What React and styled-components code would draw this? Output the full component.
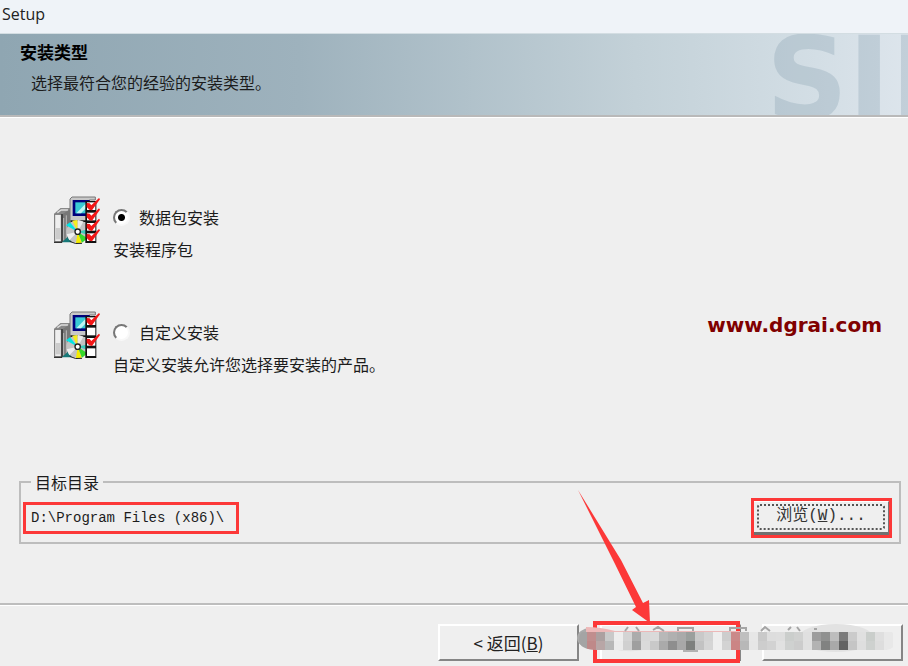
import { styled, createGlobalStyle } from "styled-components";

const songti = `"Liberation Mono", "Noto Sans CJK SC", monospace`;
const red = "#fc3838";

const GlobalStyle = createGlobalStyle`
  * {
    box-sizing: border-box;
  }

  body {
    margin: 0px;
    color: #1c1c1c;
    background-color: #efefef;
    font-size: 16px;
    font-family: "Noto Sans CJK SC", sans-serif;
  }
`;

const Window = styled.div`
  min-height: 100vh;
  display: flex;
  flex-direction: column;
  overflow: hidden;
`;

const TitleBar = styled.header`
  height: 33px;
  padding: 0px 2px;
  color: #222;
  line-height: 28px;
  font-family: "Open Sans", sans-serif;
  background-color: #eff3f8;
`;

const Banner = styled.div`
  position: relative;
  height: 84px;
  padding: 6px 20px;
  overflow: hidden;
  border-top: 1px solid #d3dde2;
  border-bottom: 2px solid #b9b9b9;
  box-shadow: 0px 1px 0px white;
  background: linear-gradient(
    to right,
    #8fa6b2 0%,
    #9eb2bd 33%,
    #c3d1d8 70%,
    #d3dee5 90%,
    #dde5ec 100%
  );
`;

const BannerTitle = styled.h1`
  margin: 0px;
  font-size: 17px;
  line-height: 24px;
  color: black;
`;

const BannerText = styled.p`
  margin: 0px;
  padding: 6px 11px;
  line-height: 24px;
`;

const BannerMark = styled.span`
  position: absolute;
  top: 2px;
  left: calc(100% - 142px);
  font-size: 114px;
  font-weight: bold;
  line-height: 86px;
  white-space: nowrap;
  color: rgba(138, 163, 178, 0.32);
  font-family: "DejaVu Sans", sans-serif;
`;

const Options = styled.div`
  display: flex;
  flex-direction: column;
  gap: 42px;
  padding: 75px 50px 40px;
`;

const Option = styled.div`
  display: flex;
  align-items: flex-start;
  gap: 9px;
`;

const OptionText = styled.div`
  padding-top: 9px;
  line-height: 32px;
`;

const RadioLabel = styled.label`
  display: flex;
  align-items: center;
  gap: 9px;
`;

const Radio = styled.input`
  appearance: none;
  width: 17px;
  height: 17px;
  margin: 0px;
  border: 2px solid;
  border-color: #777 #f8f8f8 #f8f8f8 #777;
  border-radius: 50%;
  background-color: white;

  &:checked {
    background-image: radial-gradient(circle, black 3px, transparent 4px);
  }
`;

const Description = styled.p`
  margin: 0px;
`;

const SiteName = styled.span`
  position: absolute;
  right: 26px;
  top: 310px;
  color: #800000;
  font-size: 20px;
  font-weight: bold;
  line-height: 30px;
  font-family: "DejaVu Sans", sans-serif;
`;

const Directory = styled.fieldset`
  margin: auto 7px 59px 19px;
  padding: 4px 7px 4px 2px;
  border: 2px solid #bdbdbd;
`;

const Legend = styled.legend`
  margin-left: 8px;
  padding: 0px 4px;
  line-height: 24px;
`;

const DirectoryRow = styled.div`
  display: flex;
  align-items: center;
  justify-content: space-between;
`;

const Path = styled.output`
  height: 32px;
  padding: 0px 12px 0px 5px;
  border: 3px solid ${red};
  font-size: 14px;
  line-height: 26px;
  font-family: ${songti};
`;

const BrowseFrame = styled.div`
  height: 40px;
  border: 3px solid ${red};
`;

const Browse = styled.button`
  width: 135px;
  height: 34px;
  padding: 2px 3px;
  border: none;
  border-top: 1px solid white;
  border-right: 1px solid #777;
  border-bottom: 3px solid #707070;
  color: #333;
  font-size: 16px;
  font-family: ${songti};
  background-color: #efefef;
`;

const FocusRing = styled.span`
  display: block;
  height: 26px;
  border: 2px dotted #555;
  border-radius: 3px;
  line-height: 20px;
`;

const Footer = styled.footer`
  position: relative;
  display: flex;
  justify-content: flex-end;
  gap: 21px;
  padding: 19px 5px 5px;
  border-top: 2px solid #bdbdbd;
  box-shadow: inset 0px 1px 0px white;
`;

const WizardButton = styled.button`
  width: 141px;
  height: 37px;
  padding: 0px;
  border: 2px solid;
  border-color: white #858585 #858585 white;
  color: #222;
  font-size: 17px;
  line-height: 30px;
  font-family: "Noto Sans CJK SC", sans-serif;
  background-color: #efefef;
`;

const NextStep = styled.div`
  position: relative;
  display: flex;
`;

const NextFrame = styled.div`
  position: absolute;
  inset: -3px 1px -2px -7px;
  border: 4px solid ${red};
  pointer-events: none;
`;

const Arrow = styled.svg`
  position: absolute;
  bottom: 100%;
  left: -24px;
  pointer-events: none;
`;

const Mosaic = styled.svg`
  position: absolute;
  top: 19px;
  right: 11px;
  pointer-events: none;
`;

const PackageIcon = ({ checks }) => (
  <svg width="54" height="56" viewBox="0 0 162 168" aria-hidden="true">
    <path d="M12 66 L32 48 L64 48 L64 130 L40 150 L12 150Z" fill="#aaa" />
    <path d="M12 66 L32 48 L64 48 L44 66Z" fill="#888" />
    <path d="M22 62 L34 54 L54 54" fill="none" stroke="#ddd" strokeWidth="4" />
    <rect x="14" y="67" width="20" height="82" fill="#eee" stroke="#777" strokeWidth="3" />
    <rect x="17" y="108" width="15" height="34" fill="#ccc" />
    <path d="M35 68 L62 50 V130 L40 150 H35Z" fill="#777" />
    <path d="M41 78 V145 M49 70 V140" stroke="#bbb" strokeWidth="3" />
    <path d="M36 66 V151 H12" fill="none" stroke="#111" strokeWidth="3" />
    <path d="M60 21 L66 15 H136 V24 H118 V86 H60Z" fill="#c8c8c8" stroke="#777" strokeWidth="3" />
    <rect x="68" y="24" width="51" height="48" fill="#00007c" />
    <rect x="76" y="31" width="33" height="33" fill="#39cad4" />
    <path d="M79 64 L109 33 V47 L93 64Z" fill="#bff6f4" />
    <path d="M62 88 H108" stroke="#111" strokeWidth="5" />
    <path d="M57 98 H108 V105 H57Z" fill="#999" />
    <path d="M36 151 L56 132 L66 151Z" fill="#167878" />
    <circle cx="83" cy="119" r="34" fill="#c3c3c3" />
    <path d="M83 119 L48 100 L60 91Z" fill="#00e5e5" />
    <path d="M83 119 L67 86 L82 84Z" fill="#f5ed20" />
    <path d="M83 119 L84 84 L100 89Z" fill="#e9e9e9" />
    <path d="M83 119 L50 127 L58 145Z" fill="#eee" />
    <path d="M83 119 L78 153 L95 153Z" fill="#f4ec00" />
    <path d="M83 119 L96 152 L112 139Z" fill="#34d92b" />
    <path d="M83 119 L117 111 V130Z" fill="#3bcbbb" />
    <path d="M59 148 Q76 158 96 154" fill="none" stroke="#222" strokeWidth="3" />
    <circle cx="83" cy="119" r="8" fill="white" stroke="#222" strokeWidth="4" />
    <rect x="106" y="27" width="33" height="126" fill="#111" />
    {[0, 1, 2, 3].map((i) => (
      <g key={i} transform={`translate(0 ${i * 31})`}>
        <rect x="111" y="31" width="25" height="23" fill="white" />
        {checks.includes(i) && (
          <path
            d="M110 33 L119 34 L124 40 L147 18 L150 22 L139 37 L126 55 L118 53 L110 45Z"
            fill="#f21616"
          />
        )}
      </g>
    ))}
  </svg>
);

// top and bottom shade of every 9px column
const shades = [
  ["#a4a4a4", "#a4a4a4"], ["#c08e8e", "#bf8989"], ["#aca0a0", "#b8a6a6"],
  ["#c9c9c9", "#b7b7b7"], ["#ededed", "#ebebeb"], ["#d4d4d4", "#d0d0d0"],
  ["#acacac", "#9f9f9f"], ["#d8d8d8", "#dadada"], ["#dadada", "#c9c9c9"],
  ["#b8b8b8", "#aaaaaa"], ["#b0b0b0", "#8e8e8e"], ["#aaaaaa", "#a8a8a8"],
  ["#9b9f9d", "#7e807e"], ["#c9c9c9", "#c2c2c2"], ["#d3d3d3", "#d5d5d5"],
  ["#eeeeee", "#eeeeee"], ["#cdcdcd", "#d3d3d3"], ["#ca8989", "#cb8585"],
  ["#bfbfbf", "#b8b8b8"], ["#e7e7e7", "#e6e6e6"], ["#c9c9c9", "#cdcdcd"],
  ["#dddddd", "#d2d2d2"], ["#dedede", "#e1e1e1"], ["#cbcecc", "#cfd1d0"],
  ["#d0d1d0", "#cccccc"], ["#e0e0e0", "#e0e0e0"], ["#9d9d9d", "#b3b3b3"],
  ["#909190", "#818281"], ["#bdbdbd", "#a9a9a9"], ["#7b7b7b", "#626262"],
  ["#cbcbcb", "#c5c5c5"], ["#e0e0e0", "#dedede"], ["#cacecb", "#ced1cf"],
  ["#dfdfdf", "#dddddd"], ["#e8e8e8", "#e8e8e8"],
];

const ButtonMosaic = () => (
  <Mosaic width="320" height="30" viewBox="0 0 320 30" aria-hidden="true">
    <clipPath id="brush">
      <path d="M2 16 Q2 6 12 5 L38 7 H309 Q319 7 319 15 Q319 25 309 26 H26 Q2 27 2 16Z" />
    </clipPath>
    <ellipse cx="13" cy="14" rx="13" ry="10" fill="#aaa" />
    <ellipse cx="259" cy="14" rx="38" ry="14" fill="#e2e2e2" />
    <path d="M9 3 Q23 3 38 7 H163 V9 H22 V25 Q9 20 9 12Z" fill="#edb8b8" />
    <path d="M36 25 Q50 29 66 26 H310 V22 H36Z" fill="#e4e4e4" />
    <path
      d="M48 7 L51 3 M59 3 L62 7 M76 6 L81 3 L87 7 M101 7 V4 H116 V7 M153 7 V4 H169 V7 M184 7 L188 3 L193 7 M211 6 L214 3 M220 3 L223 7 M237 5 H240"
      fill="none"
      stroke="#a5a5a5"
      strokeWidth="2"
    />
    <path d="M106 27 H121" stroke="#777" />
    <g clipPath="url(#brush)" shapeRendering="crispEdges">
      {shades.map(([top, bottom], i) => (
        <g key={i}>
          <rect x={1 + i * 9} y="8" width="9" height="9" fill={top} />
          <rect x={1 + i * 9} y="17" width="9" height="9" fill={bottom} />
        </g>
      ))}
    </g>
  </Mosaic>
);

const options = [
  {
    id: "package",
    title: "数据包安装",
    text: "安装程序包",
    checks: [0, 1, 2, 3],
  },
  {
    id: "custom",
    title: "自定义安装",
    text: "自定义安装允许您选择要安装的产品。",
    checks: [0, 2],
  },
];

const App = () => {
  return (
    <>
      <GlobalStyle />
      <Window>
        <TitleBar>Setup</TitleBar>
        <Banner>
          <BannerTitle>安装类型</BannerTitle>
          <BannerText>选择最符合您的经验的安装类型。</BannerText>
          <BannerMark aria-hidden="true">SIE</BannerMark>
        </Banner>

        <Options>
          {options.map((option) => (
            <Option key={option.id}>
              <PackageIcon checks={option.checks} />
              <OptionText>
                <RadioLabel>
                  <Radio
                    type="radio"
                    name="type"
                    value={option.id}
                    defaultChecked={option.id === "package"}
                  />
                  {option.title}
                </RadioLabel>
                <Description>{option.text}</Description>
              </OptionText>
            </Option>
          ))}
        </Options>
        <SiteName>www.dgrai.com</SiteName>

        <Directory>
          <Legend>目标目录</Legend>
          <DirectoryRow>
            <Path>D:\Program Files (x86)\</Path>
            <BrowseFrame>
              <Browse type="button">
                <FocusRing>
                  浏览(<u>W</u>)...
                </FocusRing>
              </Browse>
            </BrowseFrame>
          </DirectoryRow>
        </Directory>

        <Footer>
          <WizardButton type="button">
            &lt; 返回(<u>B</u>)
          </WizardButton>
          <NextStep>
            <WizardButton type="button" aria-label="下一步" />
            <NextFrame />
            <Arrow width="80" height="136" viewBox="0 0 80 136" aria-hidden="true">
              <path
                d="M2 2 L45 72 L67 115 L73 112 L74 135 L56 122 L60 119 L39 76Z"
                fill={red}
              />
            </Arrow>
          </NextStep>
          <WizardButton type="button" aria-label="取消" />
          <ButtonMosaic />
        </Footer>
      </Window>
    </>
  );
};

export default App;
